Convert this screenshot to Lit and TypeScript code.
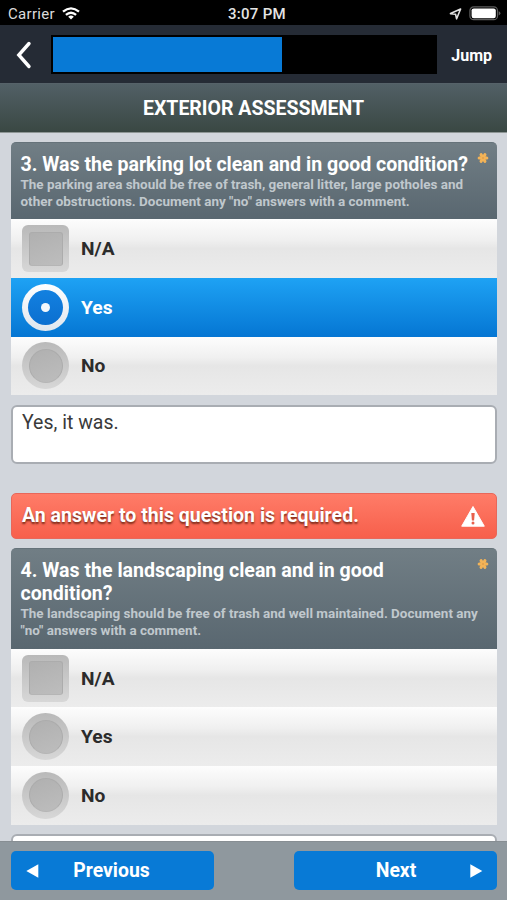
import { LitElement, html, css, svg } from "lit";
import { customElement, property } from "lit/decorators.js";
import { classMap } from "lit/directives/class-map.js";

interface Option {
  label: string;
  shape: "square" | "circle";
  selected?: boolean;
}

const carets = {
  left: svg`<path d="M0.3 7 L12.3 0.2 V13.8 Z" fill="#fff"/>`,
  right: svg`<path d="M12.3 7 L0.3 0.2 V13.8 Z" fill="#fff"/>`,
};

@customElement("status-bar")
export class StatusBar extends LitElement {
  static styles = css`
    :host {
      display: flex;
      align-items: center;
      justify-content: space-between;
      box-sizing: border-box;
      height: 25px;
      padding: 2px 6px 0 8px;
      background: #000;
      color: #dcdcdc;
      font-size: 15px;
      line-height: 20px;
    }
    .side {
      display: flex;
      align-items: center;
      flex: 1;
      gap: 7px;
    }
    .right {
      justify-content: flex-end;
      gap: 7px;
    }
    .carrier {
      letter-spacing: 0.3px;
    }
    .time {
      font-weight: 500;
      letter-spacing: 0.3px;
      color: #e4e4e4;
      padding-left: 5px;
    }
    svg {
      display: block;
    }
  `;
  render() {
    return html`
      <div class="side">
        <span class="carrier">Carrier</span>
        <svg width="18" height="13" viewBox="0 0 18 13" fill="none" stroke="#fff" stroke-width="2.3">
          <path d="M1 4.7 Q9 -2 17 4.7" />
          <path d="M3.9 7.9 Q9 3.5 14.1 7.9" />
          <path d="M9 12.4 L6.2 9.8 Q9 7.4 11.8 9.8 Z" fill="#fff" stroke="none" />
        </svg>
      </div>
      <span class="time">3:07 PM</span>
      <div class="side right">
        <svg width="13" height="12" viewBox="0 0 13 12">
          <path d="M1.5 5.6 L11.6 1 L7.6 10.8 L6.6 6.3 Z" fill="none" stroke="#e2e2e2" stroke-width="1.6" stroke-linejoin="round" />
        </svg>
        <svg width="32" height="15" viewBox="0 0 32 15">
          <rect x="0.9" y="0.9" width="27.6" height="12.8" rx="3.8" fill="none" stroke="#5c5c5c" stroke-width="1.2" />
          <rect x="2.6" y="2.4" width="24.2" height="9.8" rx="2.2" fill="#fff" />
          <path d="M29.7 5.2 Q31.4 5.8 31.4 7.3 Q31.4 8.8 29.7 9.4 Z" fill="#5c5c5c" />
        </svg>
      </div>
    `;
  }
}

@customElement("nav-header")
export class NavHeader extends LitElement {
  @property({ type: Number }) progress = 0;
  static styles = css`
    :host {
      display: flex;
      align-items: center;
      box-sizing: border-box;
      height: 58px;
      padding: 1px 15px 0 16px;
      background: #252b35;
    }
    .back {
      display: block;
      margin-right: 19px;
    }
    .track {
      box-sizing: border-box;
      width: 386px;
      height: 39px;
      padding: 2px;
      background: #000;
    }
    .bar {
      height: 35px;
      background: #087ad6;
    }
    .jump {
      margin-left: auto;
      color: #fff;
      font-size: 16px;
      font-weight: 700;
      line-height: 20px;
      padding-top: 2px;
    }
  `;
  render() {
    return html`
      <svg class="back" width="16" height="28" viewBox="0 0 16 28">
        <path d="M13 2.5 L2.8 14 L13 25.5" fill="none" stroke="#fff" stroke-width="3.4" stroke-linecap="round" stroke-linejoin="miter" />
      </svg>
      <div class="track"><div class="bar" style="width:${this.progress}%"></div></div>
      <span class="jump">Jump</span>
    `;
  }
}

@customElement("question-card")
export class QuestionCard extends LitElement {
  @property() heading = "";
  @property() hint = "";
  @property({ attribute: false }) options: Option[] = [];
  static styles = css`
    :host {
      display: block;
    }
    .head {
      display: flex;
      justify-content: space-between;
      box-sizing: border-box;
      padding: 10px 8px 9.3px 9.5px;
      border-radius: 5px 5px 0 0;
      border-top: 1px solid #66737a;
      background: linear-gradient(#717e85, #596770);
    }
    .copy {
      width: 462px;
      margin-right: -14px;
    }
    .heading {
      color: #fff;
      font-size: 19.57px;
      font-weight: 700;
      line-height: 23px;
      padding-right: 10px;
    }
    .hint {
      color: #c0c8cd;
      font-size: 13.45px;
      font-weight: 700;
      line-height: 17px;
    }
    .star {
      flex: none;
      display: block;
      margin-top: -1.5px;
    }
    .option {
      display: flex;
      align-items: center;
      box-sizing: border-box;
      height: 58.67px;
      padding-left: 11px;
      gap: 12px;
      color: #2b2b2b;
      font-size: 19.2px;
      font-weight: 700;
      background: linear-gradient(#fdfdfd 0%, #f0f0f0 35%, #e6e6e6 50%, #e9e9e9 75%, #ececec 100%);
    }
    .selected {
      color: #fff;
      background: linear-gradient(#1ea2f4, #0576d3);
    }
    .mark {
      display: grid;
      place-items: center;
      width: 47px;
      height: 47px;
      border-radius: 6px;
      background: linear-gradient(#b9b9b9, #d7d7d7);
    }
    .dent {
      display: grid;
      place-items: center;
      box-sizing: border-box;
      width: 34px;
      height: 34px;
      border-radius: 3px;
      border: 1px solid #acacac;
      border-bottom-color: #b5b5b5;
      background: linear-gradient(160deg, #b0b0b0, #bdbdbd);
    }
    .circle,
    .circle .dent {
      border-radius: 50%;
    }
    .selected .mark {
      background: linear-gradient(#fff, #dfe6ee);
    }
    .selected .dent {
      border: none;
      width: 35px;
      height: 35px;
      background: linear-gradient(#1381e0, #0b6fd0);
    }
    .dot {
      width: 9px;
      height: 9px;
      border-radius: 50%;
      background: #f4f8fc;
    }
  `;
  render() {
    return html`
      <div class="head">
        <div class="copy">
          <div class="heading">${this.heading}</div>
          <div class="hint">${this.hint}</div>
        </div>
        <svg class="star" width="12" height="12" viewBox="-6 -6 12 12">
          ${[0, 60, 120].map(
            (a) => svg`<path d="M-3.8 0 H3.8" stroke="#f3b357" stroke-width="3.1" stroke-linecap="round" transform="rotate(${a})"/>`
          )}
          <circle r="1" fill="#e09e4a" />
        </svg>
      </div>
      ${this.options.map(
        (o) => html`
          <div class=${classMap({ option: true, selected: !!o.selected })}>
            <span class=${classMap({ mark: true, circle: o.shape === "circle" })}>
              <span class="dent">${o.selected ? html`<span class="dot"></span>` : ""}</span>
            </span>
            <span>${o.label}</span>
          </div>
        `
      )}
    `;
  }
}

@customElement("app-root")
export class AppRoot extends LitElement {
  static styles = css`
    :host {
      display: flex;
      flex-direction: column;
      height: 900px;
      overflow: hidden;
      background: #d2d6dc;
      font-family: Roboto, "Liberation Sans", sans-serif;
    }
    status-bar,
    nav-header,
    .title,
    .footer {
      flex: none;
    }
    .title {
      box-sizing: border-box;
      height: 50px;
      padding-top: 1px;
      border-top: 1px solid #566269;
      border-bottom: 1px solid #8e9695;
      background: linear-gradient(#526066, #3a4843);
      color: #fff;
      font-size: 19.5px;
      font-weight: 700;
      line-height: 48px;
      text-align: center;
    }
    .list {
      flex: 1;
      min-height: 0;
      overflow: hidden;
      padding: 9px 10px 0 11px;
    }
    .comment {
      box-sizing: border-box;
      height: 59px;
      margin-top: 9.7px;
      padding: 3px 9px;
      border: 2px solid #a9adb3;
      border-radius: 6px;
      background: #fff;
      color: #3a3a3a;
      font-size: 19.5px;
      line-height: 25px;
    }
    .error {
      display: flex;
      align-items: center;
      justify-content: space-between;
      box-sizing: border-box;
      height: 46px;
      margin: 29px 0 9.5px;
      padding: 0 10px;
      border: 1px solid #e8675a;
      border-radius: 5px;
      background: linear-gradient(#ff7c68, #f75f4b);
      color: #fff;
      font-size: 19.55px;
      font-weight: 700;
      text-shadow: 0 1.5px 2px #7a2a18;
    }
    .footer {
      display: flex;
      justify-content: space-between;
      box-sizing: border-box;
      height: 59px;
      padding: 9px 10px 0 11px;
      border-top: 1px solid #878e93;
      background: #8f989e;
    }
    .button {
      display: flex;
      align-items: center;
      box-sizing: border-box;
      width: 203px;
      height: 39px;
      padding: 0 14px 0 15px;
      border-radius: 5px;
      background: #087ad6;
      color: #fff;
      font-size: 19.4px;
      font-weight: 700;
    }
    .label {
      flex: 1;
      text-align: center;
    }
    .caret + .label {
      padding-right: 16px;
    }
    .label:first-child {
      padding-left: 13px;
    }
    .caret {
      flex: none;
      display: block;
      margin-top: 1px;
    }
  `;

  private first: Option[] = [
    { label: "N/A", shape: "square" },
    { label: "Yes", shape: "circle", selected: true },
    { label: "No", shape: "circle" },
  ];

  private second: Option[] = [
    { label: "N/A", shape: "square" },
    { label: "Yes", shape: "circle" },
    { label: "No", shape: "circle" },
  ];

  render() {
    return html`
      <status-bar></status-bar>
      <nav-header .progress=${60}></nav-header>
      <div class="title">EXTERIOR ASSESSMENT</div>
      <div class="list">
        <question-card
          heading="3. Was the parking lot clean and in good condition?"
          hint="The parking area should be free of trash, general litter, large potholes and other obstructions. Document any &quot;no&quot; answers with a comment."
          .options=${this.first}
        ></question-card>
        <div class="comment">Yes, it was.</div>
        <div class="error">
          <span>An answer to this question is required.</span>
          <svg width="26" height="22" viewBox="0 0 26 22">
            <path d="M13 1.5 L24.3 21.2 H1.7 Z" fill="#fff" stroke="#fff" stroke-linejoin="round" />
            <path d="M11.3 8 H14.7 L14.1 15.4 H11.9 Z" fill="#e8604c" />
            <circle cx="13" cy="18" r="1.5" fill="#e8604c" />
          </svg>
        </div>
        <question-card
          heading="4. Was the landscaping clean and in good condition?"
          hint="The landscaping should be free of trash and well maintained. Document any &quot;no&quot; answers with a comment."
          .options=${this.second}
        ></question-card>
        <div class="comment"></div>
      </div>
      <div class="footer">
        <div class="button">
          <svg class="caret" width="13" height="14" viewBox="0 0 13 14">${carets.left}</svg>
          <span class="label">Previous</span>
        </div>
        <div class="button">
          <span class="label">Next</span>
          <svg class="caret" width="13" height="14" viewBox="0 0 13 14">${carets.right}</svg>
        </div>
      </div>
    `;
  }
}
